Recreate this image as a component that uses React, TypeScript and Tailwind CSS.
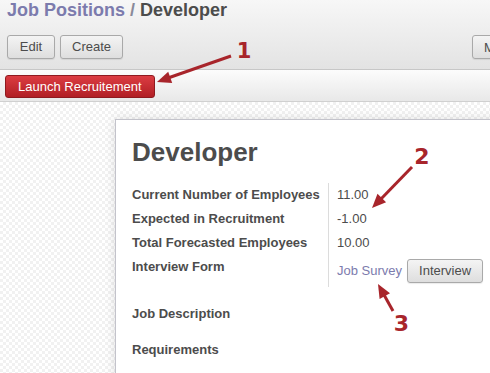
import React from 'react';

const btn =
    'h-[24px] px-[11px] rounded-[3px] border border-[#a9a9a9] bg-linear-to-b from-[#f4f4f4] to-[#dedede] text-[13px] text-[#4c4c4c] shadow-[0_1px_1px_rgba(0,0,0,0.08)] whitespace-nowrap';

const rows = [
    { label: 'Current Number of Employees', value: '11.00' },
    { label: 'Expected in Recruitment', value: '-1.00' },
    { label: 'Total Forecasted Employees', value: '10.00' },
];

function Annotations() {
    const red = '#a8252b';
    return (
        <svg className="absolute top-0 left-0 pointer-events-none" width="490" height="373" viewBox="0 0 490 373">
            {/* 1 */}
            <line x1="231" y1="56" x2="168" y2="78" stroke={red} strokeWidth="3" />
            <polygon points="157,82 168.2,71.7 172.2,83" fill={red} />
            <text x="244" y="58" textAnchor="middle" fill={red} fontFamily="'DejaVu Sans', sans-serif" fontWeight="bold" fontSize="21">1</text>
            {/* 2 */}
            <line x1="412" y1="167" x2="380" y2="200" stroke={red} strokeWidth="3" />
            <polygon points="372,208 377.5,193.8 386.1,202.2" fill={red} />
            <text x="422" y="164" textAnchor="middle" fill={red} fontFamily="'DejaVu Sans', sans-serif" fontWeight="bold" fontSize="22">2</text>
            {/* 3 */}
            <line x1="393" y1="311" x2="383" y2="293" stroke={red} strokeWidth="3" />
            <polygon points="378,284 390,293.3 379.6,299.1" fill={red} />
            <text x="401.5" y="331" textAnchor="middle" fill={red} fontFamily="'DejaVu Sans', sans-serif" fontWeight="bold" fontSize="22">3</text>
        </svg>
    );
}

export default function App() {
    return (
        <div className="relative w-[490px] h-[373px] overflow-hidden bg-white text-[#4c4c4c] font-['Liberation_Sans',Arial,sans-serif]">
            {/* Header with breadcrumb and main buttons */}
            <header className="h-[70px] border-b border-[#c7c7c7] bg-linear-to-b from-[#f7f7f7] to-[#e3e3e3]">
                <h1 className="pl-[7px] text-[18px] leading-[21.6px] font-bold">
                    <span className="text-[#7c7bad]">Job Positions</span>
                    <span className="text-[#8a8a9a]"> / </span>
                    <span className="text-[#4c4c4c]">Developer</span>
                </h1>
                <div className="mt-[13px] flex items-center pl-[7px]">
                    <div className="flex gap-[5px]">
                        <button className={`${btn} w-[48px]`}>Edit</button>
                        <button className={`${btn} w-[63px]`}>Create</button>
                    </div>
                    <div className="ml-auto w-[18px] shrink-0">
                        <button className={btn}>More</button>
                    </div>
                </div>
            </header>

            {/* Status bar */}
            <div className="h-[32px] border-b border-[#d0d0d0] bg-linear-to-b from-[#fcfcfc] to-[#e8e8e8] pt-[4px] pl-[5px]">
                <button className="h-[23px] px-[12px] rounded-[3px] border border-[#8e1a1f] bg-linear-to-b from-[#dc3c42] to-[#b11f25] text-[13px] text-white whitespace-nowrap">
                    Launch Recruitement
                </button>
            </div>

            {/* Sheet area */}
            <div className="h-[272px] pt-[17px] pl-[115px] bg-[repeating-conic-gradient(#f1f1f1_0%_25%,#ffffff_0%_50%)] bg-[length:6px_6px]">
                <div className="w-[420px] h-[300px] bg-white border border-[#c3c3cb] shadow-[0_0_10px_rgba(0,0,0,0.12)] pt-[17px] pl-[16px]">
                    <h2 className="text-[26px] leading-[31px] font-bold">Developer</h2>

                    <div className="mt-[15px] flex text-[13px]">
                        <div className="w-[196px] font-bold">
                            {rows.map((r) => (
                                <div key={r.label} className="h-[24px] leading-[24px] whitespace-nowrap">{r.label}</div>
                            ))}
                            <div className="h-[32px] leading-[24px]">Interview Form</div>
                        </div>
                        <div className="border-l border-[#dcdcdc] pl-[8px]">
                            {rows.map((r) => (
                                <div key={r.label} className="h-[24px] leading-[24px]">{r.value}</div>
                            ))}
                            <div className="h-[32px] flex items-center gap-[5px]">
                                <a className="text-[#7c7bad] whitespace-nowrap">Job Survey</a>
                                <button className={btn}>Interview</button>
                            </div>
                        </div>
                    </div>

                    <div className="mt-[15px] h-[24px] leading-[24px] text-[13px] font-bold">Job Description</div>
                    <div className="mt-[12px] h-[24px] leading-[24px] text-[13px] font-bold">Requirements</div>
                </div>
            </div>

            <Annotations />
        </div>
    );
}
